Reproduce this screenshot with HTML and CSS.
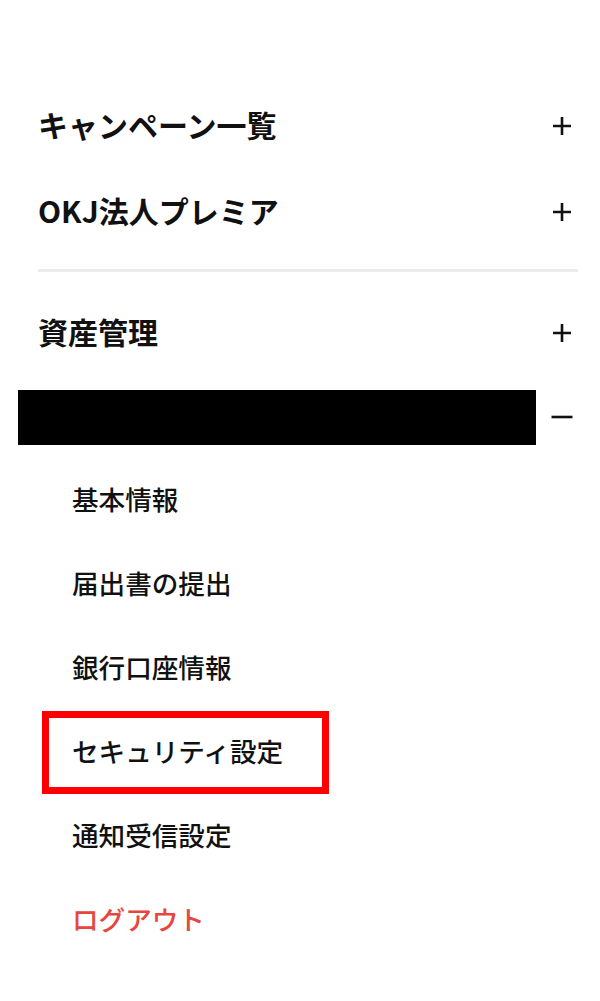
FILE: index.html
```html
<!DOCTYPE html>
<html lang="ja">
<head>
<meta charset="utf-8">
<title>メニュー</title>
<link rel="stylesheet" href="styles.css">
</head>
<body>
<nav class="menu">
  <div class="row">
    <span class="row-title">キャンペーン一覧</span>
    <svg class="toggle" viewBox="0 0 22 22" width="22" height="22"><path d="M2 11H20M11 2V20" stroke="#111" stroke-width="2.6" fill="none"/></svg>
  </div>
  <div class="row">
    <span class="row-title">OKJ法人プレミア</span>
    <svg class="toggle" viewBox="0 0 22 22" width="22" height="22"><path d="M2 11H20M11 2V20" stroke="#111" stroke-width="2.6" fill="none"/></svg>
  </div>
  <hr class="divider">
  <div class="row row-after-divider">
    <span class="row-title">資産管理</span>
    <svg class="toggle" viewBox="0 0 22 22" width="22" height="22"><path d="M2 11H20M11 2V20" stroke="#111" stroke-width="2.6" fill="none"/></svg>
  </div>
  <div class="row row-open">
    <span class="redacted" aria-label="非表示"></span>
    <svg class="toggle" viewBox="0 0 22 22" width="22" height="22"><path d="M0.5 11H21.5" stroke="#111" stroke-width="2.6" fill="none"/></svg>
  </div>
  <ul class="sub">
    <li class="sub-item">基本情報</li>
    <li class="sub-item">届出書の提出</li>
    <li class="sub-item">銀行口座情報</li>
    <li class="sub-item highlighted">セキュリティ設定<span class="mark"></span></li>
    <li class="sub-item">通知受信設定</li>
    <li class="sub-item logout">ログアウト</li>
  </ul>
</nav>
</body>
</html>
```

FILE: styles.css
```css
html, body {
  margin: 0;
  padding: 0;
  background: #ffffff;
}

body {
  font-family: "Noto Sans CJK JP", "Noto Sans", "Liberation Sans", sans-serif;
  color: #111111;
}

.menu {
  padding: 83px 22px 0 38px;
}

.row {
  display: flex;
  align-items: center;
  height: 86px;
}

.row-title {
  font-size: 30px;
  font-weight: 700;
  line-height: 1;
  margin-bottom: 4px;
}

.toggle {
  margin-left: auto;
  margin-right: 5px;
  flex: none;
}

.divider {
  border: 0;
  height: 3px;
  background: #ebebeb;
  margin: 14px 0 0 0;
}

.row-after-divider {
  margin-top: 18px;
}

.row-open {
  height: 82px;
}

.redacted {
  display: block;
  flex: none;
  width: 518px;
  height: 55px;
  margin-left: -20px;
  background: #000000;
}

.sub {
  list-style: none;
  margin: 0;
  padding: 0;
}

.sub-item {
  position: relative;
  display: flex;
  align-items: center;
  height: 84px;
  padding-left: 34px;
  padding-bottom: 2px;
  box-sizing: border-box;
  font-size: 26.6px;
  font-weight: 500;
  line-height: 1;
}

.logout {
  color: #e5463e;
}

.mark {
  position: absolute;
  left: 4px;
  top: 1px;
  width: 287px;
  height: 83px;
  box-sizing: border-box;
  border: 7.5px solid #ff0000;
}
```
